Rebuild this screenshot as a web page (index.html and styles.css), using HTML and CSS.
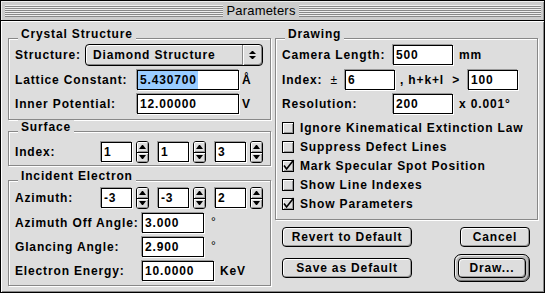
FILE: index.html
```html
<!DOCTYPE html>
<html lang="en">
<head>
    <meta charset="UTF-8">
    <title>Parameters</title>
    <link rel="stylesheet" href="styles.css">
</head>
<body>
    <div class="window">
        <div class="titlebar">
            <div class="stripes left"></div>
            <div class="title">Parameters</div>
            <div class="stripes"></div>
        </div>
        <div class="content">
            <div class="column">
                <div class="group crystal">
                    <div class="group-title">Crystal Structure</div>
                    <div class="rows">
                        <div class="row tall">
                            <span class="label w-structure">Structure:</span>
                            <div class="popup">
                                <span class="popup-text">Diamond Structure</span>
                                <span class="popup-arrows"></span>
                            </div>
                        </div>
                        <div class="row">
                            <span class="label w-crystal">Lattice Constant:</span>
                            <span class="field f-wide selected"><span class="sel">5.430700</span></span>
                            <span class="unit near">Å</span>
                        </div>
                        <div class="row">
                            <span class="label w-crystal">Inner Potential:</span>
                            <span class="field f-wide">12.00000</span>
                            <span class="unit near">V</span>
                        </div>
                    </div>
                </div>

                <div class="group surface">
                    <div class="group-title">Surface</div>
                    <div class="rows">
                        <div class="row tall">
                            <span class="label w-index">Index:</span>
                            <span class="field f-small">1</span>
                            <span class="stepper"><span class="up"></span><span class="down"></span></span>
                            <span class="field f-small pair">1</span>
                            <span class="stepper"><span class="up"></span><span class="down"></span></span>
                            <span class="field f-small pair">3</span>
                            <span class="stepper"><span class="up"></span><span class="down"></span></span>
                        </div>
                    </div>
                </div>

                <div class="group incident">
                    <div class="group-title">Incident Electron</div>
                    <div class="rows">
                        <div class="row tall">
                            <span class="label w-index">Azimuth:</span>
                            <span class="field f-small">-3</span>
                            <span class="stepper"><span class="up"></span><span class="down"></span></span>
                            <span class="field f-small pair">-3</span>
                            <span class="stepper"><span class="up"></span><span class="down"></span></span>
                            <span class="field f-small pair">2</span>
                            <span class="stepper"><span class="up"></span><span class="down"></span></span>
                        </div>
                        <div class="row">
                            <span class="label w-incident">Azimuth Off Angle:</span>
                            <span class="field f-angle">3.000</span>
                            <span class="unit deg">°</span>
                        </div>
                        <div class="row">
                            <span class="label w-incident">Glancing Angle:</span>
                            <span class="field f-angle">2.900</span>
                            <span class="unit deg">°</span>
                        </div>
                        <div class="row">
                            <span class="label w-incident">Electron Energy:</span>
                            <span class="field f-energy">10.0000</span>
                            <span class="unit">KeV</span>
                        </div>
                    </div>
                </div>
            </div>

            <div class="column">
                <div class="group drawing">
                    <div class="group-title">Drawing</div>
                    <div class="rows">
                        <div class="row tall">
                            <span class="label w-drawing">Camera Length:</span>
                            <span class="field f-draw">500</span>
                            <span class="unit">mm</span>
                        </div>
                        <div class="row">
                            <span class="label w-index-d">Index:<span class="pm">±</span></span>
                            <span class="field f-index">6</span>
                            <span class="mid">, h+k+l &nbsp;&gt;</span>
                            <span class="field f-index">100</span>
                        </div>
                        <div class="row">
                            <span class="label w-drawing">Resolution:</span>
                            <span class="field f-draw">200</span>
                            <span class="unit">x 0.001°</span>
                        </div>
                    </div>
                    <div class="checks">
                        <div class="check"><span class="box"></span>Ignore Kinematical Extinction Law</div>
                        <div class="check"><span class="box"></span>Suppress Defect Lines</div>
                        <div class="check"><span class="box"><svg width="12" height="12" viewBox="0 0 12 12"><path d="M2 5.5 L4.6 9 L11.6 0" fill="none" stroke="#000" stroke-width="1.6"/></svg></span>Mark Specular Spot Position</div>
                        <div class="check"><span class="box"></span>Show Line Indexes</div>
                        <div class="check"><span class="box"><svg width="12" height="12" viewBox="0 0 12 12"><path d="M2 5.5 L4.6 9 L11.6 0" fill="none" stroke="#000" stroke-width="1.6"/></svg></span>Show Parameters</div>
                    </div>
                </div>

                <div class="buttons">
                    <button class="button wide">Revert to Default</button>
                    <button class="button cancel">Cancel</button>
                    <button class="button wide">Save as Default</button>
                    <span class="default-ring"><button class="button draw">Draw...</button></span>
                </div>
            </div>
        </div>
    </div>
</body>
</html>
```

FILE: styles.css
```css
body {
    margin: 0;
    font-family: "Liberation Sans", Arial, sans-serif;
    font-weight: bold;
    font-size: 12px;
    letter-spacing: 0.85px;
    color: #000;
    background-color: #fff;
}

.window {
    width: 545px;
    height: 293px;
    box-sizing: border-box;
    border: 1px solid #000;
    background-color: #ddd;
    display: flex;
    flex-direction: column;
}

/* title bar */

.titlebar {
    height: 20px;
    box-sizing: border-box;
    border-bottom: 1px solid #000;
    background-color: #ccc;
    box-shadow: inset 1px 1px #eee, inset -1px 0 #999;
    display: flex;
    align-items: center;
    padding: 0 3px 0 4px;
}

.stripes {
    flex: 1;
    height: 12px;
    background: repeating-linear-gradient(#eee 0 1px, #888 1px 2px);
}

.stripes.left {
    flex: none;
    width: 218px;
}

.title {
    width: 76px;
    text-align: center;
    font-weight: normal;
    letter-spacing: 0.2px;
    font-size: 13px;
}

/* dialog body */

.content {
    flex: 1;
    display: flex;
    gap: 4px;
    padding: 17px 6px 0 7px;
    box-shadow: inset 1px 1px #fff, inset -1px -1px #888;
}

.column {
    width: 263px;
    display: flex;
    flex-direction: column;
}

.group {
    border: 1px solid #888;
    box-shadow: inset 1px 1px #fff, 1px 1px #fff;
    padding: 0 6px 5px;
    display: flex;
    flex-direction: column;
}

.group-title {
    align-self: flex-start;
    margin: -12px 0 0 3px;
    padding: 0 3px;
    line-height: 14px;
    height: 14px;
    background-color: #ddd;
}

.rows {
    display: flex;
    flex-direction: column;
    gap: 4px;
    margin-top: 3px;
}

.surface {
    margin-top: 11px;
    padding-bottom: 2px;
}

.surface .rows {
    margin-top: 7px;
}

.incident {
    margin-top: 14px;
    padding-bottom: 4px;
}

.incident .rows {
    margin-top: 4px;
}

.drawing {
    padding-bottom: 6px;
}

.row {
    height: 20px;
    display: flex;
    align-items: center;
}

.row.tall {
    height: 22px;
}

.label {
    flex: none;
    white-space: nowrap;
}

.w-structure { width: 70px; }
.w-crystal { width: 122px; }
.w-index { width: 86px; }
.w-incident { width: 127px; }
.w-drawing { width: 111px; }
.w-index-d { width: 63px; }

.pm {
    font-weight: normal;
    margin-left: 8px;
}

.mid {
    width: 73px;
    box-sizing: border-box;
    padding-left: 5px;
    white-space: nowrap;
}

/* edit fields */

.field {
    flex: none;
    height: 20px;
    box-sizing: border-box;
    border: 1px solid #000;
    background-color: #fff;
    padding: 0 2px;
    display: flex;
    align-items: center;
    box-shadow: -1px -1px #999, 1px 1px #fff;
}

.field.selected {
    padding-left: 0;
    align-items: stretch;
}

.sel {
    background-color: #9cf;
    padding: 0 1px 0 2px;
    display: flex;
    align-items: center;
}

.f-wide { width: 102px; }
.f-small { width: 31px; }
.f-angle { width: 62px; }
.f-energy { width: 72px; }
.f-draw { width: 60px; }
.f-index { width: 50px; }

.pair {
    margin-left: 9px;
}

.unit {
    margin-left: 6px;
}

.unit.near {
    margin-left: 3px;
}

.unit.deg {
    margin-left: 7px;
    padding-top: 2px;
    font-weight: normal;
    align-self: flex-start;
}

/* little arrows */

.stepper {
    flex: none;
    width: 13px;
    height: 22px;
    box-sizing: border-box;
    margin-left: 4px;
    border: 1px solid #000;
    border-radius: 3px;
    overflow: hidden;
    background-color: #ddd;
    display: flex;
    flex-direction: column;
}

.stepper span {
    flex: 1;
    display: flex;
    align-items: center;
    justify-content: center;
    box-shadow: inset 1px 1px #fff, inset -1px -1px #999;
}

.stepper .up {
    border-bottom: 1px solid #000;
}

.stepper .up::after {
    content: "";
    width: 1px;
    border-left: 3px solid transparent;
    border-right: 3px solid transparent;
    border-bottom: 4px solid #000;
}

.stepper .down::after {
    content: "";
    width: 1px;
    border-left: 3px solid transparent;
    border-right: 3px solid transparent;
    border-top: 4px solid #000;
}

/* pop-up menu */

.popup {
    width: 178px;
    height: 22px;
    box-sizing: border-box;
    border: 1px solid #000;
    border-radius: 4px;
    background-color: #ddd;
    box-shadow: inset 1px 1px #fff, inset -1px -1px #888;
    display: flex;
}

.popup-text {
    flex: 1;
    padding-left: 7px;
    display: flex;
    align-items: center;
}

.popup-arrows {
    width: 19px;
    border-left: 1px solid #888;
    box-shadow: inset 1px 0 #fff;
    display: flex;
    flex-direction: column;
    align-items: center;
    justify-content: center;
    gap: 2px;
}

.popup-arrows::before {
    content: "";
    width: 1px;
    border-left: 3px solid transparent;
    border-right: 3px solid transparent;
    border-bottom: 3px solid #000;
}

.popup-arrows::after {
    content: "";
    width: 1px;
    border-left: 3px solid transparent;
    border-right: 3px solid transparent;
    border-top: 3px solid #000;
}

/* checkboxes */

.checks {
    margin-top: 4px;
    display: flex;
    flex-direction: column;
}

.check {
    height: 19px;
    display: flex;
    align-items: center;
    gap: 6px;
    white-space: nowrap;
}

.box {
    flex: none;
    width: 12px;
    height: 12px;
    box-sizing: border-box;
    border: 1px solid #000;
    background-color: #ddd;
    box-shadow: inset 1px 1px #fff, inset -1px -1px #999;
}

.box svg {
    display: block;
    margin: -1px;
    overflow: visible;
}

/* push buttons */

.buttons {
    margin-top: 7px;
    padding: 0 8px 0 7px;
    display: grid;
    grid-template-columns: 130px 1fr;
    grid-template-rows: 20px 28px;
    row-gap: 7px;
    align-items: center;
}

.button {
    height: 20px;
    box-sizing: border-box;
    margin: 0;
    padding: 0;
    border: 1px solid #000;
    border-radius: 4px;
    background-color: #ddd;
    box-shadow: inset 1px 1px #fff, inset -1px -1px #999;
    font: inherit;
    letter-spacing: inherit;
    color: #000;
    display: flex;
    align-items: center;
    justify-content: center;
}

.cancel {
    width: 70px;
    justify-self: end;
}

.default-ring {
    justify-self: end;
    border: 1px solid #000;
    border-radius: 7px;
    padding: 3px;
    background-color: #bbb;
    box-shadow: inset 1px 1px #eee, inset -1px -1px #777;
    display: flex;
}

.draw {
    width: 68px;
}
```
